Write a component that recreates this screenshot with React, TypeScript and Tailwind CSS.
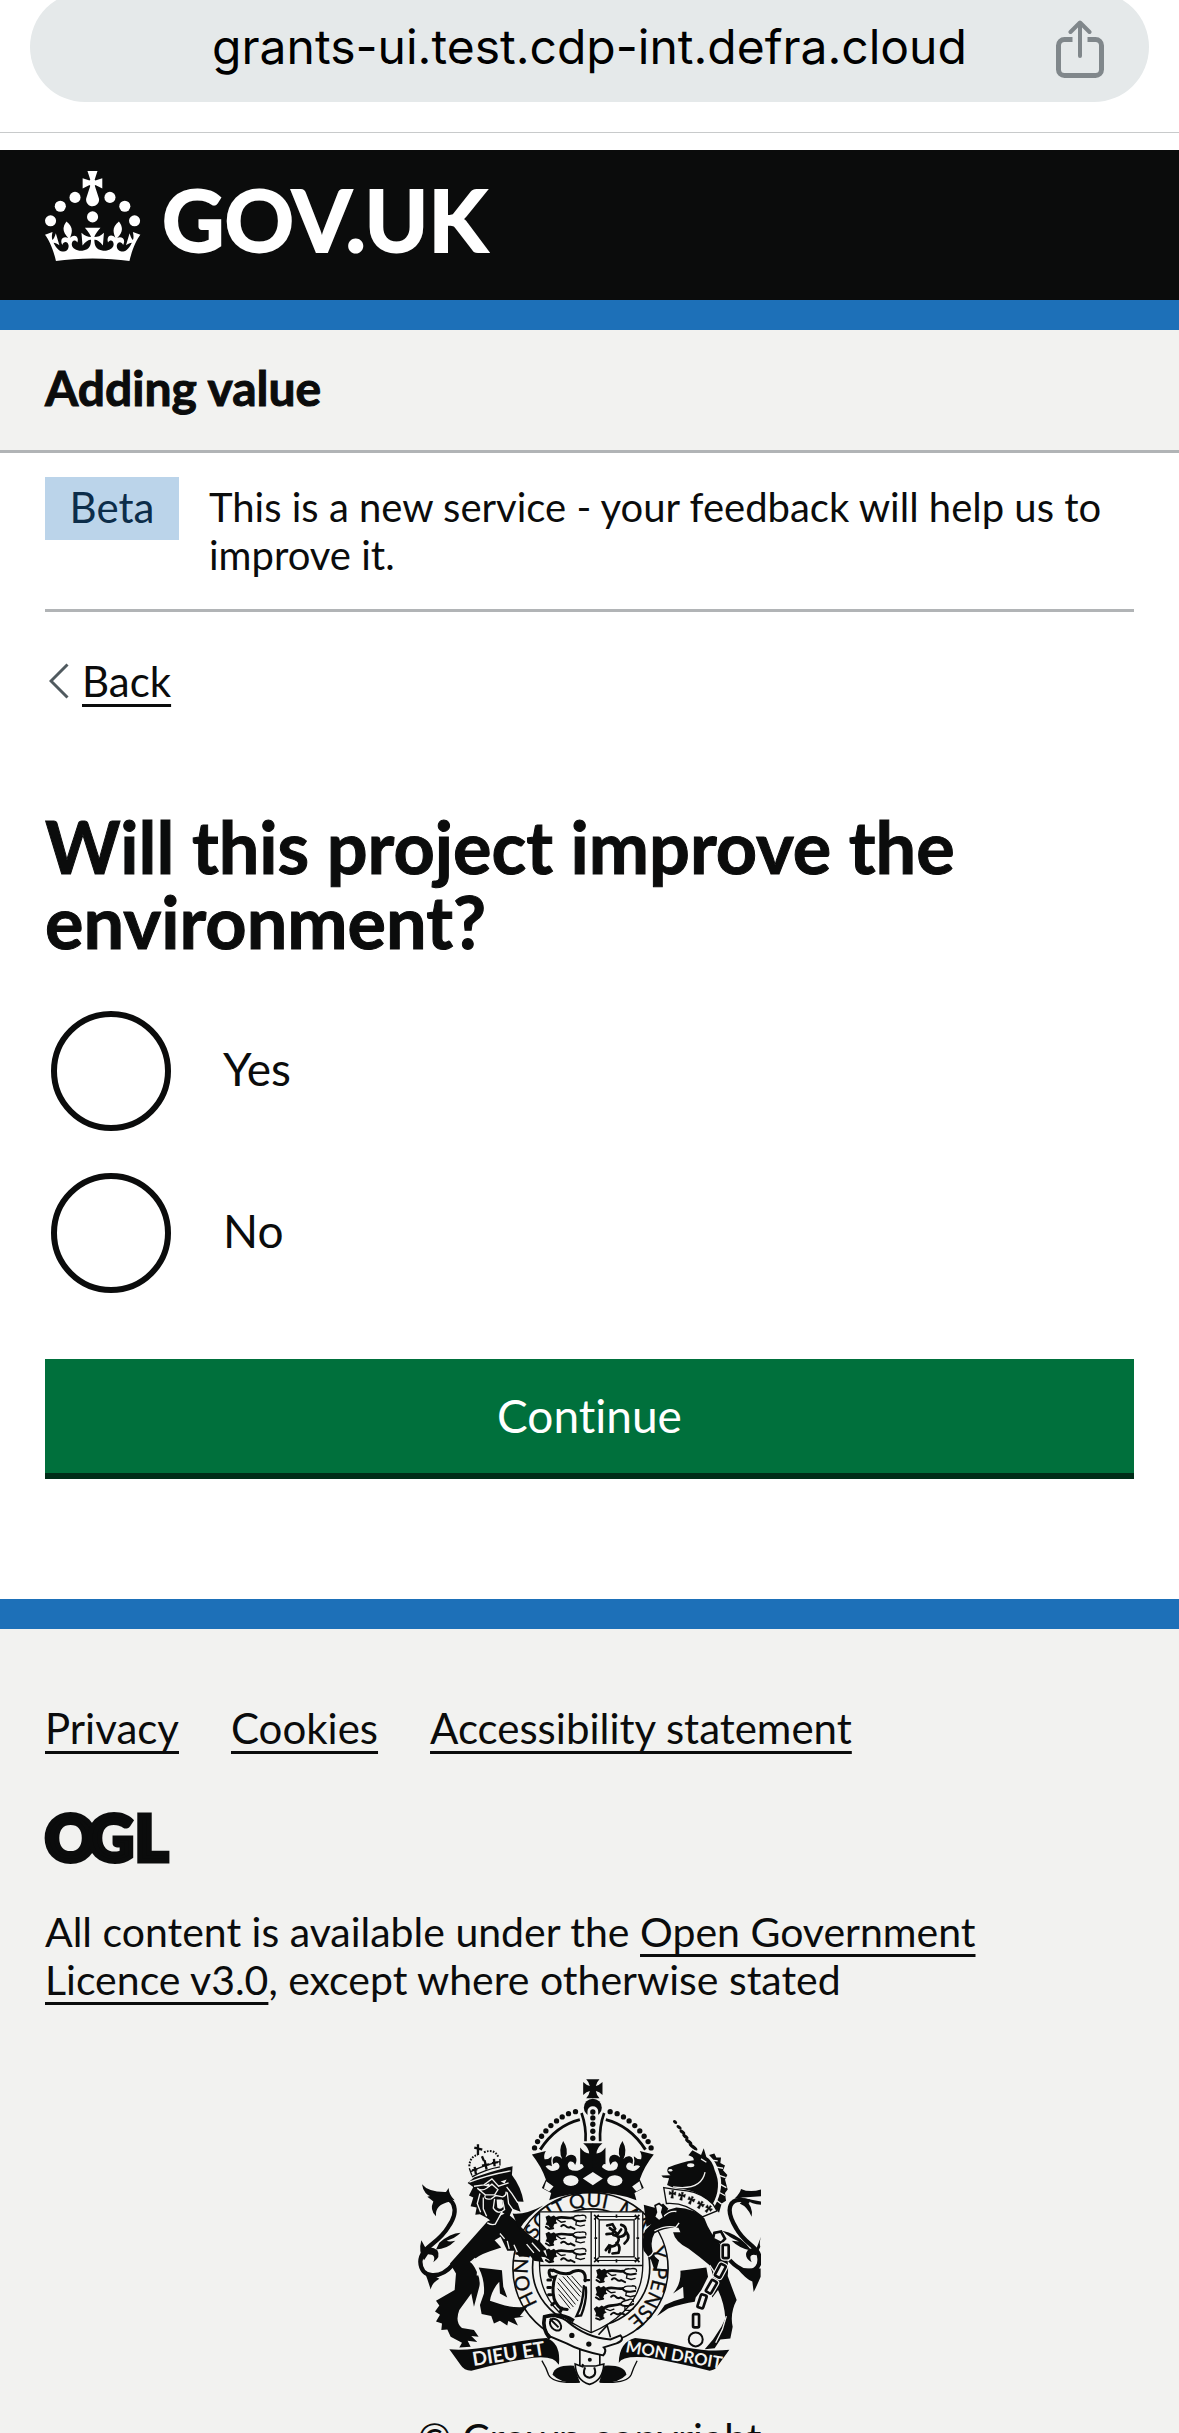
import React, { useState } from "react";

const INK = "#0b0c0c";
const PAPER = "#f2f2f0";

function ShareIcon() {
  return (
    <svg viewBox="0 0 48 58" className="h-[58px] w-12" fill="none" stroke="#80878b" strokeWidth="4" strokeLinecap="round" strokeLinejoin="round" aria-hidden="true">
      <path d="M16.5 19.5H8.5a6 6 0 0 0-6 6V49.5a6 6 0 0 0 6 6h31a6 6 0 0 0 6-6V25.5a6 6 0 0 0-6-6H31.5" strokeWidth="5" strokeLinecap="butt" />
      <path d="M24 3.5V36M14.5 12 24 2.5 33.5 12" />
    </svg>
  );
}

function TudorCrown() {
  return (
    <svg viewBox="0 0 64 60" className="h-[90px] w-24" fill="#ffffff" aria-hidden="true">
      <circle cx="20" cy="17.6" r="3.7" />
      <circle cx="10.2" cy="23.5" r="3.7" />
      <circle cx="3.7" cy="33.2" r="3.7" />
      <circle cx="31.7" cy="30.6" r="3.7" />
      <circle cx="43.3" cy="17.6" r="3.7" />
      <circle cx="53.2" cy="23.5" r="3.7" />
      <circle cx="59.7" cy="33.2" r="3.7" />
      <path d="M33.1,9.8c.2-.1.3-.3.5-.5l4.6,2.4v-6.8l-4.6,1.5c-.1-.2-.3-.3-.5-.5l1.9-5.9h-6.7l1.9,5.9c-.2.1-.3.3-.5.5l-4.6-1.5v6.8l4.6-2.4c.1.2.3.3.5.5l-2.6,8c-.9,2.8,1.2,5.7,4.1,5.7h0c3,0,5.1-2.9,4.1-5.7l-2.6-8ZM37,37.9s-3.4,3.8-4.1,6.1c2.2,0,4.2-.5,6.4-2.8l-.7,8.5c-2-2.8-4.4-4.1-5.7-3.8.1,3.1.5,6.7,5.8,7.2,3.7.3,6.7-1.5,7-3.8.4-2.6-2-4.3-3.7-1.6-1.4-4.5,2.4-6.1,4.9-3.2-1.9-4.5-1.8-7.7,2.4-10.9,3,4,2.6,7.3-1.2,11.1,2.4-1.3,6.2,0,4,4.6-1.2-2.8-3.7-2.2-4.2.2-.3,1.7.7,3.7,3,4.2,1.9.3,4.7-.9,7-5.9-1.3,0-2.4.7-3.9,1.7l2.4-8c.6,2.3,1.4,3.7,2.2,4.5.6-1.6.5-2.8,0-5.3l5,1.8c-2.6,3.6-5.2,8.7-7.3,17.5-7.4-1.1-15.7-1.7-24.5-1.7h0c-8.8,0-17.1.6-24.5,1.7-2.1-8.9-4.7-13.9-7.3-17.5l5-1.8c-.5,2.5-.6,3.7,0,5.3.8-.8,1.6-2.3,2.2-4.5l2.4,8c-1.5-1-2.6-1.7-3.9-1.7,2.3,5,5.2,6.2,7,5.9,2.3-.4,3.3-2.4,3-4.2-.5-2.4-3-3.1-4.2-.2-2.2-4.6,1.6-6,4-4.6-3.7-3.7-4.2-7.1-1.2-11.1,4.2,3.2,4.3,6.4,2.4,10.9,2.5-2.8,6.3-1.3,4.9,3.2-1.8-2.7-4.1-1-3.7,1.6.3,2.3,3.3,4.1,7,3.8,5.4-.5,5.7-4.2,5.8-7.2-1.3-.2-3.7,1-5.7,3.8l-.7-8.5c2.2,2.3,4.2,2.7,6.4,2.8-.7-2.3-4.1-6.1-4.1-6.1h10.6Z" />
    </svg>
  );
}

function OglLogo() {
  return (
    <svg viewBox="0 0 124 51" className="mt-[61px] h-[51px] w-[124px] overflow-visible" role="img" aria-label="Open Government Licence">
      <text x="0 43 90" y="48" fill={INK} stroke={INK} strokeWidth="5" fontFamily="Lato, sans-serif" fontWeight="900" fontSize="63">
        OGL
      </text>
    </svg>
  );
}

function PassantLion({ x, y }: { x: number; y: number }) {
  return (
    <g transform={`translate(${x} ${y})`} stroke={INK} fill="none" strokeLinecap="round">
      <path d="M3 6l10-5 6 5 9-4 9 7-3 11 5 5-10 3-3 10-9 3-5-8-9-4 4-8z" fill={INK} stroke="none" />
      <path d="M36 10C52 3 66 12 84 9" strokeWidth="8" />
      <path d="M84 10q8 10 24 9l14-2" strokeWidth="6" />
      <path d="M86 8C94-3 104 5 114 1q12 0 10 9" strokeWidth="4" />
      <path d="M38 14l12 8 12-2M96 18l-2 12 14 4 12-3" strokeWidth="4" />
      <path d="M4 36l10 6 12-2M50 34q8-7 14 0t14 2l12 6" strokeWidth="6" />
    </g>
  );
}

function HalfCrown() {
  return (
    <g>
      {[[527, 154], [506, 160], [487, 170], [470, 182], [453, 196], [438, 212], [425, 228], [413, 244], [404, 263]].map(([cx, cy]) => (
        <circle key={cx} cx={cx} cy={cy} r="8" fill={INK} />
      ))}
      <path d="M540 178Q468 196 421 268" stroke={INK} strokeWidth="9" fill="none" />
      <path d="M545 158Q560 200 557 243" stroke={INK} strokeWidth="8" fill="none" />
      <path
        d="M396 283L438 272Q430 285 434 297Q446 298 456 288Q452 304 456 318Q446 312 437 318Q452 340 474 328Q484 318 474 308Q466 304 460 312Q454 292 468 288Q480 286 487 296Q474 270 490 242Q508 268 497 292Q510 278 526 288Q534 298 526 314Q520 302 510 304Q498 312 508 326Q530 340 552 320Q548 308 541 312V262Q554 280 568 280Q568 264 550 249H580V420L580 397Q508 397 448 420L454 398L426 383L438 358Q424 318 396 283Z"
        fill={INK}
      />
      <path d="M439 363l22 16-13 15-16-9z" fill={PAPER} />
      <ellipse cx="513" cy="361" rx="23" ry="16" fill={PAPER} />
    </g>
  );
}

function Lion() {
  return (
    <g>
      <g fill="none" stroke={INK} strokeLinecap="round">
        <path d="M160 612C120 660 62 655 61 605C62 560 112 555 145 500C182 446 160 402 112 420" strokeWidth="13" />
      </g>
      <g fill={INK}>
        <path d="M66 372Q85 396 138 395L146 383Q146 402 164 420Q120 410 98 412Q70 402 66 372Z" />
        <path d="M150 410Q100 400 82 410Q95 420 100 424Q88 450 108 468Q104 434 150 424Z" />
        <path d="M182 518Q150 520 118 548L108 568Q140 568 166 542Q148 546 140 542Q165 535 182 518Z" />
        <path d="M64 540Q54 575 72 600L84 582Q110 582 100 606Q124 590 112 570Q95 556 78 566Z" />
        <path d="M72 630Q82 655 92 688Q96 668 118 656Z" />
        <path d="M262 484L150 610L168 640L164 690L108 722L118 736L105 754L120 764L108 784L126 790L124 810L142 808L152 830L186 848L178 862L212 860L203 842L232 846L214 828L236 830L222 810L186 804Q164 786 178 750L214 700L222 740L238 680Q245 650 214 606Q228 588 268 574L304 562L284 540L302 530L322 572L345 572L358 590L392 588L402 602L432 606L424 590L442 592L430 572L442 568L420 545Q380 525 348 482L320 458Z" />
        <path d="M236 622L306 630L310 680L322 712L300 700L298 665Q275 690 270 722L300 732Q340 745 382 740L360 768L372 770L343 774L354 796L325 783L322 796L300 782L282 790L274 768L245 762L240 735L252 700Q255 660 236 622Z" />
        <path d="M338 460Q375 465 430 436Q380 470 358 508Z" />
        <path d="M203 368L222 352Q270 335 320 322L338 318L336 344Q364 380 371 425L352 424L362 455L338 446L328 470L304 455L286 492L262 474L240 462L226 464L230 442L212 438L220 412L207 406L220 380Z" />
      </g>
      <g fill="none" stroke={PAPER} strokeWidth="4">
        <path d="M208 366Q260 345 332 332M222 378l30 -4 24-18 20 22 30-10M232 384q14 10 28 0l16-12 18 16-10 16h-28zM256 404q-6 16 18 12l14-10 20 4q12-4 10-16M284 416l-4 28q14 22 34 4l-6-28M320 380l16 20 18 28M322 396l4 34 14 20M240 400l-8 30 10 26M250 412l0 34 10 22" />
        <path d="M262 488q14 8 24 4l20-36M300 520l14 16M212 606l14 -12M328 566l-6-24M352 576l-10-22M380 552l22 26M396 548l24 26" />
        <path d="M212 604l22 20-2 22" />
      </g>
      <path d="M250 376l18-6 2 10zM302 364l18-6-6 12z" fill={PAPER} />
      <path d="M290 418l2 24q10 8 18-2l-4-22z" fill={PAPER} />
      <g stroke={INK} fill="none" strokeWidth="4">
        <path d="M216 350Q255 328 300 320M216 346l-8-22M300 316l0-20M212 334Q250 316 298 304" />
        <path d="M208 318Q210 288 234 284M252 276Q285 264 296 292" strokeDasharray="5 4" strokeWidth="6" />
        <path d="M234 252v32M223 262l24 6" strokeWidth="7" />
        <path d="M224 320l4 22M254 300l6 28M282 296l2 22M246 288l6 14" strokeWidth="7" />
        <path d="M216 330l16-2M246 316l22-4M276 308l18-2" strokeWidth="6" />
      </g>
    </g>
  );
}

function Unicorn() {
  const horn: [number, number, number][] = [[826, 185, 7], [838, 201, 9], [848, 215, 10], [857, 229, 11], [867, 244, 13], [880, 260, 16]];
  const chain: [number, number, number][] = [[978, 574, 0], [962, 632, 28], [935, 680, 30], [907, 724, 18], [889, 782, 0]];
  return (
    <g>
      {horn.map(([x, y, r]) => (
        <ellipse key={y} cx={x} cy={y} rx={r} ry="5" transform={`rotate(38 ${x} ${y})`} fill={INK} />
      ))}
      <path d="M990 600C1020 632 1062 650 1078 612C1090 560 1040 560 1010 505C975 448 985 405 1050 424" stroke={INK} strokeWidth="13" fill="none" />
      <g fill={INK}>
        <path d="M1084 388Q1050 398 1024 386Q1022 398 1004 416L1030 412L1084 408ZM1020 412L1084 424V434Q1056 432 1040 418ZM1036 418Q1062 440 1056 470Q1044 440 1020 430Z" />
        <path d="M968 512Q1008 520 1040 552L1056 572Q1020 566 996 542L1018 544Q990 534 968 512ZM1084 530Q1078 548 1082 560L1070 585Q1044 580 1056 606Q1030 590 1044 570Q1060 560 1070 566ZM1012 624Q1040 658 1058 664Q1060 680 1062 696Q1075 670 1083 650L1083 625Z" />
        <path d="M805 322Q798 336 812 345L785 346L790 352L808 354L802 374Q820 384 850 386Q884 392 908 408L938 434Q968 380 945 330Q938 300 920 290L912 264L904 284L878 270L866 285Q884 290 882 300Q845 305 805 322Z" />
        <path d="M928 284L944 280L950 292L964 292L962 308L976 316L970 330L983 344L976 358L984 388L976 398L979 422L966 430L958 458L944 440Q976 380 958 335Q950 305 928 284Z" />
        <path d="M732 434L770 444L790 430L806 446L782 478L740 500Z" />
        <path d="M736 510Q760 488 766 476Q785 452 830 442Q885 445 914 474Q930 520 968 560Q990 590 984 648L1011 720Q990 760 999 800L992 835L962 838L945 865L915 868L940 838L965 800L977 775Q974 730 955 690L938 712L930 690L942 660Q938 630 928 614Q900 590 866 565Q826 545 820 516H842L836 503Q790 502 764 520Q746 550 766 590L778 600L770 630L764 630L754 600L732 572Q724 540 736 510Z" />
        <path d="M842 632L920 622L925 650L905 690L888 712L885 725Q850 730 805 745L772 768L795 735Q820 722 852 714L850 680L820 700Q845 670 842 632Z" />
      </g>
      <g stroke={PAPER} fill="none" strokeWidth="4">
        <path d="M820 380Q905 392 916 336M904 296l16 10M946 320l24 4M954 344l24 8M958 370l22 12M958 396l18 10M950 420l16 12M936 300l18 2" />
        <path d="M764 512Q800 494 828 502l10-14M746 590q20-10 14-30M790 470q20-20 40-16M980 768l-12 40-20 40M930 615l20 30" />
      </g>
      <ellipse cx="873" cy="315" rx="11" ry="6" fill={PAPER} />
      <ellipse cx="812" cy="330" rx="6" ry="4" fill={PAPER} />
      <path d="M792 382L800 430Q860 426 908 470L952 452L940 432Q905 398 862 392Q824 388 792 382Z" fill={PAPER} stroke={INK} strokeWidth="4" />
      <g fill={INK} stroke={INK}>
        {[[818, 402, 5], [846, 408, 12], [874, 420, 24], [902, 434, 32], [926, 446, 40]].map(([x, y, a]) => (
          <path key={x} d="M-3-12h6l-1 8 8-4v10l-8-2 2 12h-8l2-12-8 2v-10l8 4z" strokeWidth="1" transform={`translate(${x} ${y}) rotate(${a})`} />
        ))}
      </g>
      <path d="M766 436l12 -6 12 10-4 16 6 16-14 10-14-12 6-14z" fill={PAPER} stroke={INK} strokeWidth="5" />
      <path d="M944 518l20-4 12 22-12 12-24-12z" fill={PAPER} stroke={INK} strokeWidth="8" />
      {chain.map(([x, y, a]) => (
        <g key={y} transform={`rotate(${a} ${x} ${y})`} fill="none">
          <rect x={x - 9} y={y - 20} width="18" height="40" rx="4" stroke={PAPER} strokeWidth="15" />
          <rect x={x - 9} y={y - 20} width="18" height="40" rx="4" stroke={INK} strokeWidth="8" fill={PAPER} />
        </g>
      ))}
      <circle cx="888" cy="838" r="21" fill="none" stroke={INK} strokeWidth="6" />
    </g>
  );
}

function RoyalArms() {
  return (
    <svg viewBox="54 56 1030 922" className="h-[307px] w-[343px]" role="img" aria-label="Royal coat of arms" fontFamily="Lato, sans-serif">
      <ellipse cx="572" cy="625" rx="233" ry="228" fill={PAPER} stroke={INK} strokeWidth="5" />
      <path id="garter" d="M414 730A188 188 0 1 1 730 730A188 188 0 0 1 572 812" fill="none" />
      <g fill={INK} stroke={INK} strokeWidth="1" fontSize="60">
        <text><textPath href="#garter" startOffset="0">HONI</textPath></text>
        <text><textPath href="#garter" startOffset="200">SOIT</textPath></text>
        <text><textPath href="#garter" startOffset="342">QUI</textPath></text>
        <text><textPath href="#garter" startOffset="484">MAL</textPath></text>
        <text><textPath href="#garter" startOffset="634">Y</textPath></text>
        <text><textPath href="#garter" startOffset="690">PENSE</textPath></text>
      </g>
      <circle cx="574" cy="622" r="176" fill={PAPER} stroke={INK} strokeWidth="5" />
      <path d="M419 455H729V616Q728 752 574 818Q420 752 419 616Z" fill={PAPER} stroke={INK} strokeWidth="4" />
      <path d="M574 455V818M419 616H729" stroke={INK} strokeWidth="4" />

      {[464, 514, 564].map((y) => <PassantLion key={y} x={434} y={y} />)}
      <PassantLion x={586} y={624} />
      <PassantLion x={584} y={676} />
      <g transform="rotate(-12 600 750)"><PassantLion x={580} y={736} /></g>

      <g fill="none" stroke={INK}>
        <rect x="587" y="469" width="127" height="132" strokeWidth="3" />
        <rect x="598" y="479" width="105" height="111" strokeWidth="4" />
        <path d="M583 464l14 14M597 464l-14 14M705 464l14 14M719 464l-14 14M583 592l14 14M597 592l-14 14M705 592l14 14M719 592l-14 14M650 463v10M650 597v10M584 534h8M710 534h8" strokeWidth="5" />
        <path d="M622 496l16-4 8 14-8 14-18 2M630 504l24 18 10-14M640 524q24 4 14 22t-26 10l-10 14M650 548q14 10 6 30l-18 2M656 530q20 0 22-16t-14-20M680 516q14 18-6 34M632 556l-4 20" strokeWidth="8" strokeLinecap="round" />
      </g>

      <g fill="none" stroke={INK} strokeLinecap="round">
        <path d="M458 632q-12-8-10 8t18 10q-8 20-6 50t24 46l18 2" strokeWidth="9" />
        <path d="M452 660h-8M452 682h-8M454 704h-8M464 728l-8 6M486 744l-4 10" strokeWidth="9" />
        <path d="M460 630Q500 650 520 634Q560 622 556 662" strokeWidth="9" />
        <path d="M554 660h14M552 678Q550 730 530 768L544 766Q562 720 558 682" strokeWidth="7" />
        <path d="M478 656L534 722M490 650L540 708M502 648L544 696M516 648L546 682M474 668L526 732M474 686L520 740M478 704L510 744" strokeWidth="3" />
      </g>

      <path d="M596 824L622 796L632 832" fill="none" stroke={INK} strokeWidth="5" />
      <path d="M540 868h60v56h-60z" fill={PAPER} stroke={INK} strokeWidth="5" />
      <path d="M434 770Q470 762 500 782Q560 834 632 838L662 826Q676 840 650 850L612 862Q622 872 610 886Q540 872 500 850L452 830Q424 806 434 770Z" fill={PAPER} stroke={INK} strokeWidth="6" />
      <path d="M522 782Q480 756 434 770Q426 806 450 836" fill="none" stroke={INK} strokeWidth="11" />
      <ellipse cx="467" cy="794" rx="14" ry="20" transform="rotate(-42 467 794)" fill={PAPER} stroke={INK} strokeWidth="6" />
      <path d="M450 776l26 26" stroke={INK} strokeWidth="6" />
      <circle cx="516" cy="826" r="8" fill={INK} />
      <circle cx="567" cy="852" r="8" fill={INK} />
      <circle cx="570" cy="899" r="6" fill={INK} />

      <HalfCrown />
      <g transform="matrix(-1 0 0 1 1158 0)"><HalfCrown /></g>
      <path d="M579 335l30 20-30 20-30-20z" fill={PAPER} />
      <path d="M559 57h40Q590 66 588 77Q598 75 608 65V104Q598 94 588 92Q590 104 599 114H559Q568 104 570 92Q560 94 550 104V65Q560 75 570 77Q568 66 559 57Z" fill={INK} />
      <circle cx="579" cy="142" r="27" fill={INK} />
      <path d="M563 170V152a16 14 0 0 1 32 0V170Z" fill={PAPER} />
      {[155, 173, 192, 213, 234].map((y) => <circle key={y} cx="579" cy={y} r="8" fill={INK} />)}

      <Lion />
      <Unicorn />

      <g fill={INK}>
        <path d="M148 868Q200 874 300 855Q380 838 440 834Q484 850 477 914Q462 886 400 893Q300 908 214 932Q192 932 182 915Z" />
        <path d="M989 869Q930 876 860 862Q780 842 706 834Q658 846 657 908Q668 886 740 892Q830 908 930 932Q948 930 956 915Z" />
        <path d="M458 944Q464 914 522 917L540 967Q484 972 458 944Z" />
        <path d="M680 944Q674 914 614 917L598 967Q654 972 680 944Z" />
      </g>
      <path d="M426 902Q440 925 446 944Q460 972 540 966M712 902Q700 925 694 944Q680 972 600 966" fill="none" stroke={INK} strokeWidth="4" />
      <path d="M526 912L548 920Q546 908 552 918H588L612 912Q610 962 569 973Q528 962 526 912Z" fill={PAPER} stroke={INK} strokeWidth="5" />
      <path d="M556 922Q544 948 569 953Q594 948 583 922" fill="none" stroke={INK} strokeWidth="6" />
      <g fill={PAPER} fontWeight="700" textAnchor="middle">
        <text transform="translate(329 901) rotate(-9)" fontSize="58">DIEU ET</text>
        <text transform="translate(820 901) rotate(10)" fontSize="50">MON DROIT</text>
      </g>
    </svg>
  );
}

const linkClass = "underline decoration-3 underline-offset-[7px]";

function Radio({ value, checked, onSelect }: { value: string; checked: boolean; onSelect: (v: string) => void }) {
  const id = `improve-${value.toLowerCase()}`;
  return (
    <div className="flex items-center gap-[52px] pl-1.5">
      <input
        id={id}
        type="radio"
        name="improve"
        value={value}
        checked={checked}
        onChange={() => onSelect(value)}
        className="size-[120px] shrink-0 appearance-none rounded-full border-6 border-[#0b0c0c] bg-white checked:bg-[#0b0c0c] checked:bg-clip-content checked:p-6"
      />
      <label htmlFor={id} className="pb-1 text-[46px] leading-[60px]">{value}</label>
    </div>
  );
}

export default function App() {
  const [answer, setAnswer] = useState("");
  return (
    <div className="min-h-screen bg-[#f2f2f0] font-['Lato',sans-serif] text-[#0b0c0c] [font-variant-ligatures:none]">
      <div className="overflow-hidden border-b border-[#c8cacb] bg-white px-[30px] pb-[30px]">
        <div className="-mt-2 flex h-[110px] items-center rounded-full bg-[#e5e9ea] pr-[45px] pl-[93px]">
          <span className="flex-1 text-center font-['Inter',sans-serif] text-5xl leading-[60px] text-black">grants-ui.test.cdp-int.defra.cloud</span>
          <button type="button" aria-label="Share" className="pt-1"><ShareIcon /></button>
        </div>
      </div>
      <div className="bg-white pt-[17px]">
        <header className="flex h-[180px] items-start gap-[21px] border-b-[30px] border-[#1d70b8] bg-[#0b0c0c] px-[45px] pt-[21px]">
          <TudorCrown />
          <a href="#home" className="text-[86px] leading-[96px] font-bold text-white [-webkit-text-stroke:2px_white]">GOV.UK</a>
        </header>
        <nav className="border-b-3 border-[#b1b4b6] bg-[#f2f2f0] px-[45px] pt-7 pb-8">
          <a href="#service" className="block text-5xl leading-[60px] font-bold [-webkit-text-stroke:1px_#0b0c0c]">Adding value</a>
        </nav>
        <div className="px-[45px]">
          <div className="flex items-start gap-[30px] border-b-3 border-[#b1b4b6] pt-6 pb-[30px]">
            <strong className="w-[134px] shrink-0 bg-[#bbd4ea] pt-1.5 pb-[9px] text-center text-[42px] leading-[48px] font-normal text-[#0c2d4a]">Beta</strong>
            <p className="pt-1.5 text-[40px] leading-[48px]">This is a new service - your feedback will help us to improve it.</p>
          </div>
          <div className="mt-[45px] flex items-center gap-[13px]">
            <svg viewBox="0 0 20 36" className="ml-1 h-9 w-5" fill="none" stroke="#505a5f" strokeWidth="3" aria-hidden="true">
              <path d="M18.5 1.5 2 18 18.5 34.5" />
            </svg>
            <a href="#back" className={`text-[42px] leading-[48px] ${linkClass}`}>Back</a>
          </div>
          <main className="mt-[104px] pb-[120px]">
            <form onSubmit={(e) => e.preventDefault()}>
              <fieldset>
                <legend>
                  <h1 className="max-w-[1000px] text-7xl leading-[75px] font-bold [-webkit-text-stroke:1px_#0b0c0c]">Will this project improve the environment?</h1>
                </legend>
                <div className="mt-[52px] flex flex-col gap-[42px]">
                  {["Yes", "No"].map((v) => (
                    <Radio key={v} value={v} checked={answer === v} onSelect={setAnswer} />
                  ))}
                </div>
              </fieldset>
              <button type="submit" className="mt-[66px] block h-[120px] w-full border-b-6 border-[#002d18] bg-[#00703c] text-[46px] leading-[60px] text-white">Continue</button>
            </form>
          </main>
        </div>
      </div>
      <footer className="border-t-[30px] border-[#1d70b8] px-[45px] pt-[75px] pb-12">
        <ul className="flex gap-[52px] text-[42px] leading-[48px]">
          <li><a href="#privacy" className={linkClass}>Privacy</a></li>
          <li><a href="#cookies" className={linkClass}>Cookies</a></li>
          <li><a href="#accessibility" className={linkClass}>Accessibility statement</a></li>
        </ul>
        <OglLogo />
        <p className="mt-11 max-w-[960px] text-[41px] leading-[48px]">
          All content is available under the <a href="#ogl" className={linkClass}>Open Government Licence v3.0</a>, except where otherwise stated
        </p>
        <a href="#copyright" className="mt-[75px] flex flex-col items-center gap-7 text-[41px] leading-[48px]">
          <RoyalArms />
          <span>© Crown copyright</span>
        </a>
      </footer>
    </div>
  );
}
